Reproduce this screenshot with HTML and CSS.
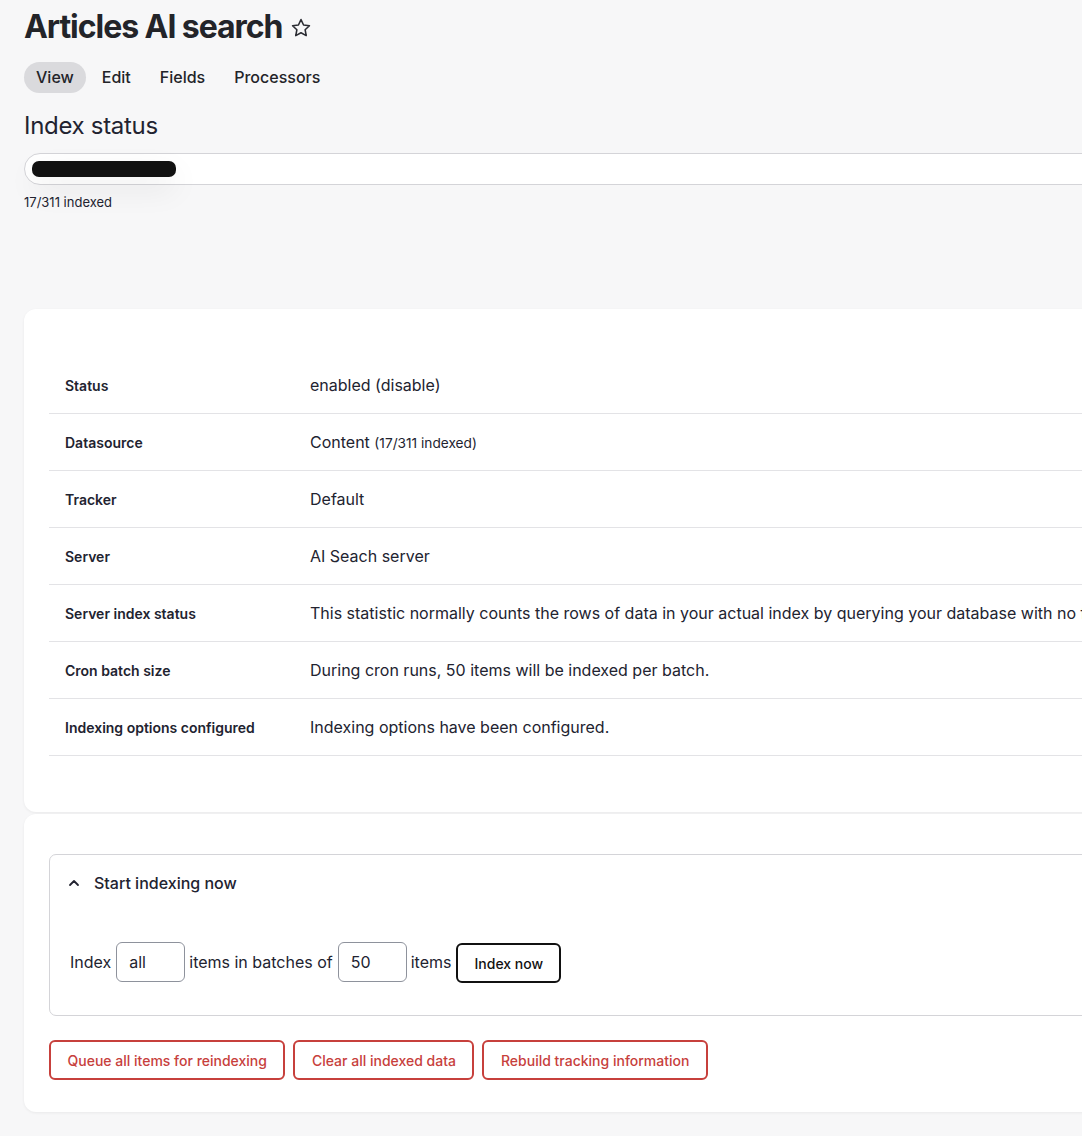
FILE: index.html
```html
<!DOCTYPE html>
<html lang="en">

<head>
    <meta charset="UTF-8">
    <meta name="viewport" content="width=device-width, initial-scale=1.0">
    <title>Articles AI search</title>
    <link rel="stylesheet" href="styles.css">
</head>

<body>
    <div class="page">
        <div class="title-row">
            <h1 class="page-title">Articles AI search</h1>
            <svg class="star" width="22" height="22" viewBox="0 0 24 24">
                <path d="M12 2.8l2.8 5.9 6.4.8-4.7 4.4 1.2 6.4L12 17.2l-5.7 3.1 1.2-6.4-4.7-4.4 6.4-.8z" fill="none"
                    stroke="#2b2c33" stroke-width="1.7" stroke-linejoin="round" />
            </svg>
        </div>

        <ul class="tabs">
            <li class="tab active">View</li>
            <li class="tab">Edit</li>
            <li class="tab">Fields</li>
            <li class="tab">Processors</li>
        </ul>

        <h2 class="section-title">Index status</h2>
        <div class="progress">
            <div class="progress-fill"></div>
        </div>
        <div class="progress-label">17/311 indexed</div>

        <div class="card card-info">
            <table class="info-table">
                <tr>
                    <th>Status</th>
                    <td>enabled (disable)</td>
                </tr>
                <tr>
                    <th>Datasource</th>
                    <td>Content <small>(17/311 indexed)</small></td>
                </tr>
                <tr>
                    <th>Tracker</th>
                    <td>Default</td>
                </tr>
                <tr>
                    <th>Server</th>
                    <td>AI Seach server</td>
                </tr>
                <tr>
                    <th>Server index status</th>
                    <td>This statistic normally counts the rows of data in your actual index by querying your database with no filters applied.</td>
                </tr>
                <tr>
                    <th>Cron batch size</th>
                    <td>During cron runs, 50 items will be indexed per batch.</td>
                </tr>
                <tr>
                    <th>Indexing options configured</th>
                    <td>Indexing options have been configured.</td>
                </tr>
            </table>
        </div>

        <div class="card card-actions">
            <div class="details">
                <div class="summary">
                    <svg class="chevron" width="12" height="12" viewBox="0 0 12 12">
                        <path d="M2 8l4-4 4 4" fill="none" stroke="#222330" stroke-width="1.8" stroke-linecap="round"
                            stroke-linejoin="round" />
                    </svg>
                    Start indexing now
                </div>
                <div class="index-form">
                    <span>Index</span>
                    <input class="text-input" type="text" value="all">
                    <span>items in batches of</span>
                    <input class="text-input" type="text" value="50">
                    <span>items</span>
                    <button class="btn btn-dark">Index now</button>
                </div>
            </div>

            <div class="danger-buttons">
                <button class="btn btn-danger">Queue all items for reindexing</button>
                <button class="btn btn-danger">Clear all indexed data</button>
                <button class="btn btn-danger">Rebuild tracking information</button>
            </div>
        </div>
    </div>
</body>

</html>
```

FILE: styles.css
```css
html,
body {
    margin: 0;
    padding: 0;
}

body {
    background-color: #f7f7f8;
    color: #222330;
    font-family: Inter, "Noto Sans", sans-serif;
    overflow-x: hidden;
}

.page {
    width: 1400px;
    padding: 6px 0 24px 24px;
}

.title-row {
    display: flex;
    align-items: center;
    gap: 8px;
}

.page-title {
    margin: 0;
    font-size: 32px;
    font-weight: 700;
    letter-spacing: -1.05px;
    line-height: 42px;
    color: #232429;
}

.star {
    margin-top: 2px;
}

.tabs {
    display: flex;
    list-style: none;
    margin: 14px 0 0 0;
    padding: 0;
}

.tab {
    font-size: 16px;
    font-weight: 500;
    line-height: 31px;
    padding: 0 14.5px;
    border-radius: 16px;
    color: #232429;
}

.tab.active {
    background-color: #dadadd;
    padding: 0 12px;
    margin-right: 1.5px;
}

.section-title {
    margin: 20px 0 0 0;
    font-size: 24px;
    font-weight: 400;
    line-height: 26px;
    letter-spacing: -0.3px;
}

.progress {
    margin-top: 14px;
    height: 32px;
    box-sizing: border-box;
    border: 1px solid #d4d4d8;
    border-radius: 16px;
    background-color: #ffffff;
    padding: 7px;
}

.progress-fill {
    width: 144px;
    height: 16px;
    border-radius: 7px;
    background-color: #111111;
    box-shadow: 0 12px 30px rgba(0, 0, 0, 0.08);
}

.progress-label {
    margin-top: 10px;
    font-size: 13px;
    line-height: 14px;
}

.card {
    background-color: #ffffff;
    border-radius: 12px;
    box-shadow: 0 1px 3px rgba(0, 0, 0, 0.06);
}

.card-info {
    margin-top: 100px;
    padding: 48px 24px 56px 25px;
}

.info-table {
    width: 100%;
    border-collapse: collapse;
}

.info-table th,
.info-table td {
    height: 56px;
    border-bottom: 1px solid #e3e3e6;
    text-align: left;
    vertical-align: middle;
    padding: 0 16px;
}

.info-table th {
    width: 213px;
    font-size: 14px;
    font-weight: 600;
}

.info-table td {
    font-size: 16px;
    font-weight: 400;
    white-space: nowrap;
}

.info-table small {
    font-size: 13.7px;
}

.card-actions {
    margin-top: 2px;
    padding: 40px 24px 32px 25px;
}

.details {
    border: 1px solid #d4d4d8;
    border-radius: 7px;
    padding: 0 20px 32px 18px;
}

.summary {
    display: flex;
    align-items: center;
    gap: 14px;
    height: 56px;
    font-size: 16px;
    font-weight: 500;
}

.index-form {
    display: flex;
    align-items: center;
    gap: 4px;
    margin-top: 30px;
    padding-left: 2px;
    font-size: 16px;
}

.text-input {
    width: 69px;
    height: 40px;
    margin-left: 1px;
    box-sizing: border-box;
    border: 1px solid #8e929c;
    border-radius: 6px;
    padding: 0 12px;
    font-family: Inter, "Noto Sans", sans-serif;
    font-size: 16px;
    color: #222330;
    background-color: #ffffff;
}

.btn {
    height: 40px;
    box-sizing: border-box;
    border-radius: 6px;
    background-color: #ffffff;
    font-family: Inter, "Noto Sans", sans-serif;
    font-size: 14px;
    font-weight: 500;
    padding: 0 16.5px;
    white-space: nowrap;
    cursor: pointer;
}

.btn-dark {
    border: 2px solid #111111;
    color: #111111;
    padding: 0 16px;
    margin-left: 1px;
    margin-top: 2px;
}

.danger-buttons {
    display: flex;
    gap: 8px;
    margin-top: 24px;
}

.btn-danger {
    border: 2px solid #c7403c;
    color: #c7403c;
}
```
